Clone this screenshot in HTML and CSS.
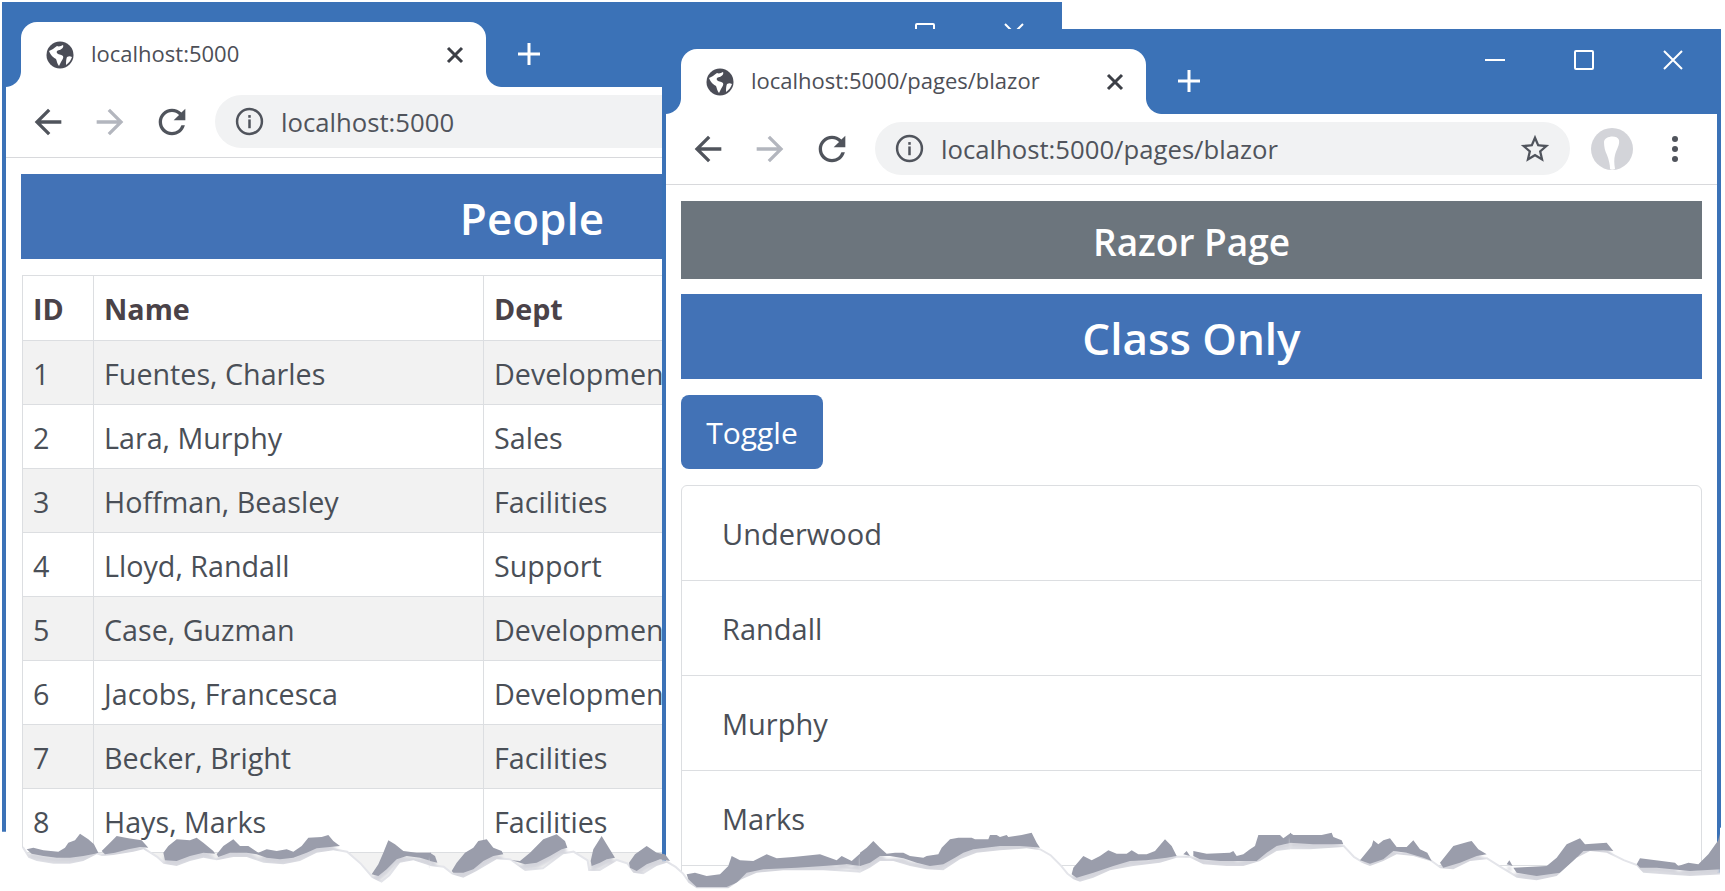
FILE: index.html
```html
<!DOCTYPE html>
<html lang="en">

<head>
    <meta charset="UTF-8">
    <title>localhost:5000</title>
    <link rel="stylesheet" href="styles.css">
</head>

<body>
    <svg class="defs" width="0" height="0">
        <symbol id="globe" viewBox="0 0 28 28">
            <circle cx="14" cy="14" r="13.5" fill="#4b4d57" />
            <path fill="#fff" d="M3 10c3-1 5-3 8-5 2 1 4 0 6-1 1 2-1 4-3 5-2 0-4 1-3 3 1 2 4 1 6 3 1 2-1 4-2 6l-2 4c-2-2-2-5-3-7-2-1-5-3-7-8zM21 16c2-1 3-1 5 0-1 3-3 6-6 8 0-3 0-6 1-8z" />
        </symbol>
        <symbol id="back" viewBox="0 0 24 24">
            <path d="M20 11H7.83l5.59-5.59L12 4l-8 8 8 8 1.41-1.41L7.83 13H20v-2z" />
        </symbol>
        <symbol id="reload" viewBox="0 0 24 24">
            <path d="M17.65 6.35A7.958 7.958 0 0 0 12 4c-4.42 0-7.99 3.58-7.99 8s3.57 8 7.99 8c3.73 0 6.84-2.55 7.73-6h-2.08A5.99 5.99 0 0 1 12 18c-3.31 0-6-2.69-6-6s2.69-6 6-6c1.66 0 3.14.69 4.22 1.78L13 11h7V4l-2.35 2.35z" />
        </symbol>
        <symbol id="info" viewBox="0 0 28 28">
            <circle cx="14" cy="14" r="12" fill="none" stroke="currentColor" stroke-width="2.4" />
            <rect x="12.8" y="12" width="2.4" height="8.5" fill="currentColor" />
            <rect x="12.8" y="7.8" width="2.4" height="2.6" fill="currentColor" />
        </symbol>
        <symbol id="close" viewBox="0 0 20 20">
            <path d="M3 3l14 14M17 3L3 17" fill="none" stroke="currentColor" stroke-width="3" />
        </symbol>
        <symbol id="plus" viewBox="0 0 24 24">
            <path d="M12 1v22M1 12h22" fill="none" stroke="currentColor" stroke-width="3" />
        </symbol>
    </svg>

    <div class="window window-back">
        <div class="strip">
            <div class="tab">
                <svg class="tab-globe"><use href="#globe" /></svg>
                <span class="tab-title">localhost:5000</span>
                <svg class="tab-close"><use href="#close" /></svg>
            </div>
            <svg class="new-tab"><use href="#plus" /></svg>
            <div class="caption">
                <span class="cap-btn"><svg width="20" height="2"><rect width="20" height="2" fill="#fff" /></svg></span>
                <span class="cap-btn"><svg width="20" height="20"><rect x="1" y="1" width="18" height="18" rx="1" fill="none" stroke="#fff" stroke-width="2" /></svg></span>
                <span class="cap-btn"><svg width="20" height="20"><path d="M1 1l18 18M19 1L1 19" stroke="#fff" stroke-width="2" /></svg></span>
            </div>
        </div>
        <div class="toolbar">
            <svg class="nav"><use href="#back" /></svg>
            <svg class="nav nav-off"><use href="#back" /></svg>
            <svg class="nav"><use href="#reload" /></svg>
            <div class="address">
                <svg class="info"><use href="#info" /></svg>
                <span class="url">localhost:5000</span>
            </div>
        </div>
        <div class="content">
            <div class="banner banner-blue">People</div>
            <table class="people">
                <thead>
                    <tr>
                        <th class="col-id">ID</th>
                        <th class="col-name">Name</th>
                        <th>Dept</th>
                    </tr>
                </thead>
                <tbody>
                    <tr><td>1</td><td>Fuentes, Charles</td><td>Development</td></tr>
                    <tr><td>2</td><td>Lara, Murphy</td><td>Sales</td></tr>
                    <tr><td>3</td><td>Hoffman, Beasley</td><td>Facilities</td></tr>
                    <tr><td>4</td><td>Lloyd, Randall</td><td>Support</td></tr>
                    <tr><td>5</td><td>Case, Guzman</td><td>Development</td></tr>
                    <tr><td>6</td><td>Jacobs, Francesca</td><td>Development</td></tr>
                    <tr><td>7</td><td>Becker, Bright</td><td>Facilities</td></tr>
                    <tr><td>8</td><td>Hays, Marks</td><td>Facilities</td></tr>
                    <tr><td></td><td></td><td></td></tr>
                </tbody>
            </table>
        </div>
    </div>

    <div class="window window-front">
        <div class="strip">
            <div class="tab">
                <svg class="tab-globe"><use href="#globe" /></svg>
                <span class="tab-title">localhost:5000/pages/blazor</span>
                <svg class="tab-close"><use href="#close" /></svg>
            </div>
            <svg class="new-tab"><use href="#plus" /></svg>
            <div class="caption">
                <span class="cap-btn"><svg width="20" height="2"><rect width="20" height="2" fill="#fff" /></svg></span>
                <span class="cap-btn"><svg width="20" height="20"><rect x="1" y="1" width="18" height="18" rx="1" fill="none" stroke="#fff" stroke-width="2" /></svg></span>
                <span class="cap-btn"><svg width="20" height="20"><path d="M1 1l18 18M19 1L1 19" stroke="#fff" stroke-width="2" /></svg></span>
            </div>
        </div>
        <div class="toolbar">
            <svg class="nav"><use href="#back" /></svg>
            <svg class="nav nav-off"><use href="#back" /></svg>
            <svg class="nav"><use href="#reload" /></svg>
            <div class="address address-short">
                <svg class="info"><use href="#info" /></svg>
                <span class="url">localhost:5000/pages/blazor</span>
                <svg class="star" viewBox="0 0 24 24"><path d="M22 9.24l-7.19-.62L12 2 9.19 8.63 2 9.24l5.46 4.73L5.82 21 12 17.27 18.18 21l-1.63-7.03L22 9.24zM12 15.4l-3.76 2.27 1-4.28-3.32-2.88 4.38-.38L12 6.1l1.71 4.04 4.38.38-3.32 2.88 1 4.28L12 15.4z" /></svg>
            </div>
            <svg class="avatar" viewBox="0 0 42 42">
                <circle cx="21" cy="21" r="21" fill="#d3d4d9" />
                <path fill="#fff" d="M13 14c0-6 13-8 15-2 1 5-3 10-4 15-1 4-1 8 0 14-2 1-4 1-5 0 0-4-1-9-3-14-2-4-3-8-3-13z" />
            </svg>
            <div class="menu"><i></i><i></i><i></i></div>
        </div>
        <div class="content">
            <div class="banner banner-gray">Razor Page</div>
            <div class="banner banner-blue">Class Only</div>
            <button class="toggle">Toggle</button>
            <ul class="names">
                <li>Underwood</li>
                <li>Randall</li>
                <li>Murphy</li>
                <li>Marks</li>
                <li></li>
            </ul>
        </div>
    </div>

    <!-- torn paper edge, traced in 3x units -->
    <svg class="tear" viewBox="0 0 5175 240" width="1725" height="80">
        <g>
            <polyline class="tear-glow" points="66,110 85,140 110,150 160,158 210,158 250,150 290,130 305,135 340,132 400,122 430,115 470,140 490,158 530,165 570,150 610,140 650,148 700,138 740,138 790,155 850,160 900,150 950,125 1000,118 1040,125 1080,160 1115,200 1145,215 1170,195 1200,155 1240,148 1290,165" />
            <g class="tear-blobs">
                <polygon class="tear-dark" points="80,115 100,110 130,118 175,122 195,110 205,95 225,88 240,68 265,85 282,100 295,125 285,128 250,135 210,140 170,140 130,135 95,128" />
                <polygon class="tear-dark" points="305,120 330,95 350,75 385,82 425,88 445,110 420,108 385,115 345,125 315,130" />
                <polygon class="tear-dark" points="490,125 505,105 530,85 570,88 590,80 610,95 640,120 645,128 610,125 570,135 530,150 495,148" />
                <polygon class="tear-dark" points="650,130 670,105 700,85 720,105 745,105 775,125 800,115 830,120 860,115 880,122 905,105 925,80 965,78 985,72 1000,90 1020,105 990,108 950,112 920,125 880,140 840,145 800,140 770,130 740,125 690,125 655,138" />
                <polygon class="tear-dark" points="1115,190 1135,160 1150,125 1165,88 1185,100 1210,120 1250,125 1293,125 1293,150 1260,140 1220,135 1190,145 1160,175 1135,195" />
            </g>
            <polygon class="tear-floor" points="0,62 20,62 66,110 85,140 110,150 160,158 210,158 250,150 290,130 305,135 340,132 400,122 430,115 470,140 490,158 530,165 570,150 610,140 650,148 700,138 740,138 790,155 850,160 900,150 950,125 1000,118 1040,125 1080,160 1115,200 1145,215 1170,195 1200,155 1240,148 1293,165 1293,240 0,240" />
        </g>
        <g transform="translate(1290 0)">
            <polyline class="tear-glow" points="0,165 40,170 65,190 100,200 140,180 200,145 240,148 285,180 340,175 400,130 430,125 470,150 475,180 510,180 560,150 590,160 610,185 640,190 680,165 710,155 735,170 757,190 775,215 800,232 895,232 935,205 980,185 1060,178 1180,178 1290,185" />
            <g class="tear-blobs">
                <polygon class="tear-dark" points="0,125 15,135 22,155 0,150" />
                <polygon class="tear-dark" points="65,180 80,155 105,125 130,110 145,90 170,85 190,110 215,120 220,130 190,135 160,150 130,175 100,185 70,185" />
                <polygon class="tear-dark" points="245,148 270,150 300,125 340,85 380,70 405,90 412,110 395,115 360,135 320,155 285,160" />
                <polygon class="tear-dark" points="482,150 490,115 515,75 530,100 555,140 530,145 510,155 485,165" />
                <polygon class="tear-dark" points="597,155 615,130 650,105 680,125 705,130 720,150 690,145 650,160 620,180 600,170" />
                <polygon class="tear-dark" points="770,190 795,185 830,195 870,190 895,165 905,135 930,148 970,150 1010,130 1040,142 1090,138 1170,130 1220,148 1235,135 1265,150 1293,125 1293,165 1250,160 1180,165 1100,170 1000,175 950,185 920,215 890,228 800,228 775,205" />
            </g>
            <polygon class="tear-floor" points="0,165 40,170 65,190 100,200 140,180 200,145 240,148 285,180 340,175 400,130 430,125 470,150 475,180 510,180 560,150 590,160 610,185 640,190 680,165 710,155 735,170 757,190 775,215 800,232 895,232 935,205 980,185 1060,178 1180,178 1293,185 1293,240 0,240" />
        </g>
        <g transform="translate(2580 0)">
            <polyline class="tear-glow" points="0,185 30,170 60,150 100,150 150,165 200,175 250,178 300,145 350,125 420,118 500,112 540,118 570,135 600,165 620,190 640,205 660,212 700,200 750,178 820,165 900,155 950,140 990,140 1030,160 1100,165 1150,165 1200,150 1250,120 1290,115" />
            <g class="tear-blobs">
                <polygon class="tear-dark" points="0,125 20,110 40,90 60,110 80,128 105,125 130,125 150,135 190,140 200,135 235,130 245,110 270,85 295,80 335,80 345,85 385,85 390,72 410,72 420,78 440,72 445,78 485,72 515,65 530,95 540,110 520,108 480,105 420,105 340,115 310,125 285,140 250,160 210,165 170,155 130,142 90,135 60,135 30,155 0,165" />
                <polygon class="tear-dark" points="640,170 670,135 695,148 720,135 745,118 770,128 800,128 815,118 835,130 860,130 885,120 915,85 935,105 950,135 920,140 860,148 810,150 760,165 700,185 650,200 635,190" />
                <polygon class="tear-dark" points="970,130 980,120 990,135" />
                <polygon class="tear-dark" points="1000,120 1040,128 1110,125 1120,120 1130,135 1150,130 1170,115 1185,105 1195,72 1260,72 1270,82 1293,65 1293,95 1250,105 1220,125 1190,150 1130,150 1080,150 1020,145 1000,135" />
            </g>
            <polygon class="tear-floor" points="0,185 30,170 60,150 100,150 150,165 200,175 250,178 300,145 350,125 420,118 500,112 540,118 570,135 600,165 620,190 640,205 660,212 700,200 750,178 820,165 900,155 950,140 990,140 1030,160 1100,165 1150,165 1200,150 1250,120 1293,115 1293,240 0,240" />
        </g>
        <g transform="translate(3870 0)">
            <polyline class="tear-glow" points="0,115 60,115 160,108 190,140 215,155 240,165 280,150 320,130 370,135 420,150 450,172 490,175 540,150 590,145 630,170 680,200 740,208 800,195 860,140 900,120 950,125 1000,150 1040,165 1060,185 1120,190 1200,195 1305,190" />
            <g class="tear-blobs">
                <polygon class="tear-dark" points="0,65 10,72 95,72 125,65 130,78 155,88 160,100 130,100 70,100 0,95" />
                <polygon class="tear-dark" points="210,148 245,105 250,88 265,100 280,88 300,82 320,108 350,108 370,88 390,115 412,125 425,150 400,140 350,125 310,120 280,145 240,158" />
                <polygon class="tear-dark" points="450,155 490,105 535,92 545,90 565,115 590,130 560,135 510,155 460,170" />
                <polygon class="tear-dark" points="650,160 658,148 668,165" />
                <polygon class="tear-dark" points="670,170 770,165 800,140 830,100 870,82 885,100 950,95 970,120 940,118 880,120 850,150 810,185 740,195 680,185" />
                <polygon class="tear-dark" points="1040,160 1050,142 1115,150 1155,155 1165,165 1195,155 1225,160 1255,130 1285,88 1292,60 1292,175 1200,180 1100,170 1050,170" />
            </g>
            <polygon class="tear-floor" points="0,115 60,115 160,108 190,140 215,155 240,165 280,150 320,130 370,135 420,150 450,172 490,175 540,150 590,145 630,170 680,200 740,208 800,195 860,140 900,120 950,125 1000,150 1040,165 1060,185 1120,190 1200,195 1305,190 1305,240 0,240" />
        </g>
        <rect class="tear-floor" x="5160" y="50" width="15" height="190" />
    </svg>
</body>

</html>
```

FILE: styles.css
```css
* {
    box-sizing: border-box;
}

html,
body {
    height: 100%;
}

body {
    margin: 0;
    background: #fff;
    overflow: hidden;
    font-family: "Open Sans", "Noto Sans", sans-serif;
    color: #4a4f57;
}

.defs {
    position: absolute;
}

/* browser windows */
.window {
    position: absolute;
    background: #3b72b7;
    padding: 0 4px;
    overflow: hidden;
}

.window-back {
    left: 2px;
    top: 2px;
    width: 1060px;
    height: 889px;
}

.window-front {
    left: 662px;
    top: 29px;
    width: 1059px;
    height: 862px;
}

.strip {
    display: flex;
    align-items: flex-end;
    height: 85px;
    padding-left: 15px;
}

.tab {
    position: relative;
    display: flex;
    align-items: center;
    width: 465px;
    height: 65px;
    padding: 0 21px 0 25px;
    background: #fff;
    border-radius: 16px 16px 0 0;
}

.tab::before,
.tab::after {
    content: "";
    position: absolute;
    bottom: 0;
    width: 16px;
    height: 16px;
}

.tab::before {
    left: -16px;
    background: radial-gradient(circle at 0 0, #3b72b7 15.5px, #fff 16.5px);
}

.tab::after {
    right: -16px;
    background: radial-gradient(circle at 100% 0, #3b72b7 15.5px, #fff 16.5px);
}

.tab-globe {
    width: 28px;
    height: 28px;
    flex: none;
}

.tab-title {
    margin-left: 17px;
    padding-bottom: 3px;
    flex: 1;
    font-size: 22px;
    white-space: nowrap;
    color: #4d4f57;
}

.tab-close {
    width: 20px;
    height: 20px;
    flex: none;
    color: #3c3f46;
}

.new-tab {
    width: 24px;
    height: 24px;
    margin: 0 0 21px 31px;
    flex: none;
    color: #fff;
}

.caption {
    display: flex;
    margin-left: auto;
    align-self: flex-start;
}

.cap-btn {
    display: flex;
    align-items: center;
    justify-content: center;
    width: 89px;
    height: 62px;
}

.toolbar {
    display: flex;
    align-items: center;
    height: 71px;
    padding: 0 0 1px 11px;
    background: #fff;
    border-bottom: 1px solid #d8d9dc;
}

.nav {
    width: 62px;
    height: 40px;
    flex: none;
    fill: #50545c;
}

.nav-off {
    fill: #b3b6be;
    transform: scaleX(-1);
}

.address {
    display: flex;
    align-items: center;
    flex: 1;
    height: 53px;
    margin-left: 12px;
    padding: 0 20px;
    background: #f1f2f3;
    border-radius: 27px;
    white-space: nowrap;
}

.address-short {
    flex: none;
    width: 695px;
}

.info {
    width: 29px;
    height: 29px;
    flex: none;
    color: #50545c;
}

.url {
    margin-left: 17px;
    padding-top: 2px;
    flex: 1;
    font-size: 25.7px;
    color: #50545c;
}

.star {
    width: 34px;
    height: 34px;
    margin-right: -2px;
    flex: none;
    fill: #50545c;
}

.avatar {
    width: 42px;
    height: 42px;
    margin-left: 21px;
    flex: none;
}

.menu {
    display: flex;
    flex-direction: column;
    gap: 4px;
    margin-left: 39px;
}

.menu i {
    width: 6px;
    height: 6px;
    background: #50545c;
    border-radius: 50%;
}

/* page content */
.content {
    height: 100%;
    padding: 16px 15px;
    background: #fff;
}

.banner {
    display: flex;
    align-items: center;
    justify-content: center;
    padding-top: 3px;
    color: #fff;
    font-weight: 600;
    white-space: nowrap;
}

.banner-blue {
    height: 85px;
    margin-bottom: 16px;
    background: #4272b6;
    font-size: 44px;
}

.banner-gray {
    height: 78px;
    margin-bottom: 15px;
    background: #6c757d;
    font-size: 37px;
}

.people {
    width: 1021px;
    margin-left: 1px;
    border-collapse: collapse;
    table-layout: fixed;
    font-size: 28.7px;
}

.people th,
.people td {
    height: 64px;
    padding: 2px 10px 0;
    border: 1px solid #dcdee1;
    text-align: left;
    white-space: nowrap;
}

.people th {
    height: 65px;
    padding-top: 1px;
    font-weight: 700;
    color: #4a4248;
}

.people tbody tr:nth-child(odd) {
    background: #f2f2f2;
}

.col-id {
    width: 71px;
}

.col-name {
    width: 390px;
}

.toggle {
    display: block;
    width: 142px;
    height: 74px;
    margin: 0 0 16px;
    padding: 0;
    background: #4272b6;
    border: 0;
    border-radius: 8px;
    color: #fff;
    font-family: inherit;
    font-size: 30px;
}

.names {
    margin: 0;
    padding: 0;
    list-style: none;
    border: 1px solid #dcdee1;
    border-radius: 6px;
}

.names li {
    height: 95px;
    padding: 0 40px;
    border-bottom: 1px solid #dcdee1;
    font-size: 29px;
    line-height: 96px;
}

/* torn bottom edge */
.tear {
    position: absolute;
    left: 0;
    top: 811px;
}

.tear-blobs {
    filter: drop-shadow(0 16px 5px #d4d5dc);
}

.tear-dark {
    fill: #9a9dab;
}

.tear-glow {
    fill: none;
    stroke: #e4e5ea;
    stroke-width: 12;
}

.tear-floor {
    fill: #fff;
}
```
